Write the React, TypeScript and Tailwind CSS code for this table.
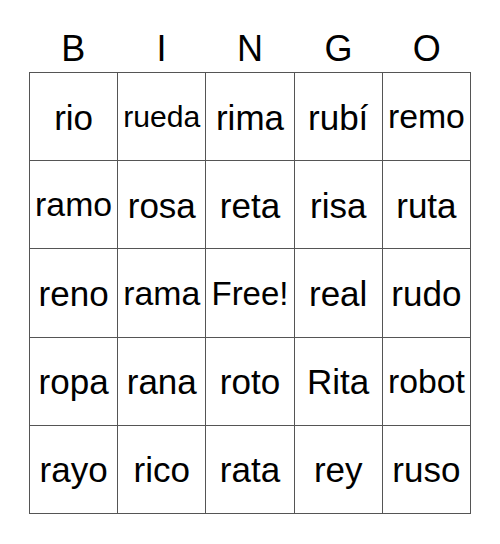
const letters = ["B", "I", "N", "G", "O"];

const words = [
  ["rio", "rueda", "rima", "rubí", "remo"],
  ["ramo", "rosa", "reta", "risa", "ruta"],
  ["reno", "rama", "Free!", "real", "rudo"],
  ["ropa", "rana", "roto", "Rita", "robot"],
  ["rayo", "rico", "rata", "rey", "ruso"],
];

// approximate Arial advance widths, used to shrink long words to the cell
const advance: Record<string, number> = {
  r: 0.333, i: 0.222, o: 0.556, u: 0.556, e: 0.556, d: 0.556, a: 0.556,
  m: 0.833, b: 0.556, "í": 0.278, s: 0.5, t: 0.278, n: 0.556, l: 0.222,
  y: 0.5, p: 0.556, c: 0.5, F: 0.611, "!": 0.278, R: 0.722,
};

function fitSize(word: string) {
  const em = word.split("").reduce((sum, ch) => sum + (advance[ch] ?? 0.556), 0);
  return Math.min(35, 77 / em);
}

export default function App() {
  return (
    <div
      className="w-[500px] h-[544px] bg-white text-black"
      style={{ fontFamily: '"Liberation Sans", Arial, sans-serif' }}
    >
      <div className="ml-[29px] w-[442px] grid grid-cols-5 h-[72px] pt-[31px] text-[36px] leading-none">
        {letters.map((l) => (
          <div key={l} className="text-center">
            {l}
          </div>
        ))}
      </div>
      <div className="ml-[29px] w-[442px] h-[442px] grid grid-cols-5 grid-rows-5 border-l border-t border-[#555]">
        {words.flat().map((w, i) => (
          <div
            key={i}
            className="flex items-center justify-center pt-px border-r border-b border-[#555] leading-none whitespace-nowrap"
            style={{ fontSize: fitSize(w) }}
          >
            {w}
          </div>
        ))}
      </div>
    </div>
  );
}
